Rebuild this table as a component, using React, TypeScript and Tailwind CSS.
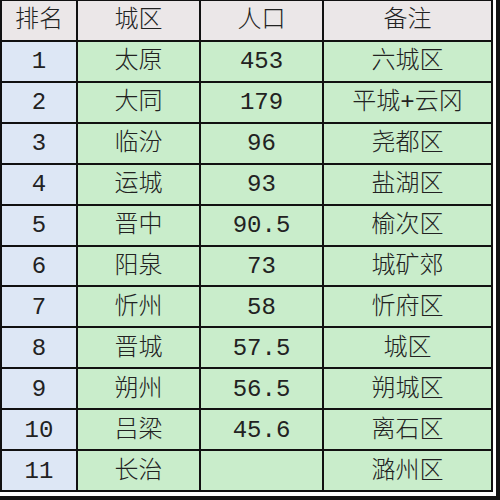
const rows = [
  ["1", "太原", "453", "六城区"],
  ["2", "大同", "179", "平城+云冈"],
  ["3", "临汾", "96", "尧都区"],
  ["4", "运城", "93", "盐湖区"],
  ["5", "晋中", "90.5", "榆次区"],
  ["6", "阳泉", "73", "城矿郊"],
  ["7", "忻州", "58", "忻府区"],
  ["8", "晋城", "57.5", "城区"],
  ["9", "朔州", "56.5", "朔城区"],
  ["10", "吕梁", "45.6", "离石区"],
  ["11", "长治", "", "潞州区"],
];

const font = {
  fontFamily: '"Liberation Mono", "Noto Sans CJK SC", monospace',
};

const cell = "flex items-center justify-center leading-none pt-[2px]";

const App = () => {
  return (
    <div className="w-[500px] h-[500px] bg-[#141414] pr-[4px] pb-[4px]">
      <div className="w-full h-full bg-white pr-[3px] pb-[4px]">
        <div
          className="w-full h-full bg-[#111] pt-[1px] pl-[2px] pr-[2px] pb-[2px] grid grid-cols-[74px_121px_121px_1fr] grid-rows-[repeat(12,1fr)] gap-[2px] text-[24px] text-[#222]"
          style={font}
        >
          {["排名", "城区", "人口", "备注"].map((h) => (
            <div key={h} className={`bg-[#ebe7e8] font-light ${cell}`}>
              {h}
            </div>
          ))}
          {rows.map((r) => (
            <>
              <div key={r[0] + "a"} className={`bg-[#dde7f5] font-normal ${cell}`}>
                {r[0]}
              </div>
              <div key={r[0] + "b"} className={`bg-[#c9edcb] font-light ${cell}`}>
                {r[1]}
              </div>
              <div key={r[0] + "c"} className={`bg-[#c9edcb] font-normal ${cell}`}>
                {r[2]}
              </div>
              <div key={r[0] + "d"} className={`bg-[#c9edcb] font-light ${cell}`}>
                {r[3]}
              </div>
            </>
          ))}
        </div>
      </div>
    </div>
  );
};

export default App;
